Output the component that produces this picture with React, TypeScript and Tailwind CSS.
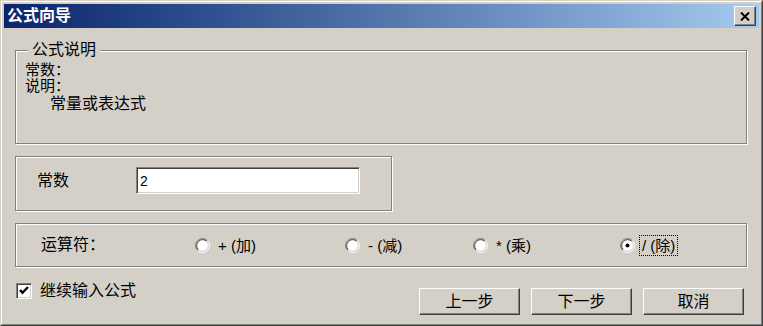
import React from 'react';

const FONT = { fontFamily: '"Liberation Sans", "Noto Sans CJK SC", sans-serif' };

// 经典风格单选框
function Radio({ checked }: { checked?: boolean }) {
  return (
    <svg width="15" height="15" viewBox="0 0 15 15" className="shrink-0">
      <circle cx="7.5" cy="7.5" r="6" fill="#ffffff" />
      <path d="M2.55 12.45 A7 7 0 0 1 12.45 2.55" fill="none" stroke="#808080" strokeWidth="1" />
      <path d="M12.45 2.55 A7 7 0 0 1 2.55 12.45" fill="none" stroke="#ffffff" strokeWidth="1" />
      <path d="M3.26 11.74 A6 6 0 0 1 11.74 3.26" fill="none" stroke="#404040" strokeWidth="1" />
      <path d="M11.74 3.26 A6 6 0 0 1 3.26 11.74" fill="none" stroke="#d4d0c8" strokeWidth="1" />
      {checked && <circle cx="7.5" cy="7.5" r="2" fill="#000000" />}
    </svg>
  );
}

function Button({ children }: { children: React.ReactNode }) {
  return (
    <div className="w-[101px] h-[27px] flex items-center justify-center text-[16px] text-black bg-[#d4d0c8]
      border border-t-white border-l-white border-b-[#404040] border-r-[#404040]
      shadow-[inset_-1px_-1px_0_#808080]">
      {children}
    </div>
  );
}

const OPS = [
  { label: '+ (加)', w: 'w-[150px]' },
  { label: '- (减)', w: 'w-[128px]' },
  { label: '* (乘)', w: 'w-[147px]' },
  { label: '/ (除)', w: '', checked: true },
];

export default function App() {
  return (
    <div style={FONT} className="w-[763px] h-[326px] bg-[#d4d0c8] text-black leading-none overflow-hidden
      border border-t-[#d4d0c8] border-l-[#d4d0c8] border-b-[#404040] border-r-[#404040]">
      <div className="w-full h-full p-[2px] border border-t-white border-l-white border-b-[#808080] border-r-[#808080]">
        {/* 标题栏 */}
        <div className="h-[24px] flex items-center justify-between bg-gradient-to-r from-[#0a246a] to-[#a6caf0]">
          <span className="pl-[3px] text-[16px] font-bold text-white">公式向导</span>
          <div className="mr-[3px] w-[22px] h-[20px] flex items-center justify-center bg-[#d4d0c8]
            border border-t-white border-l-white border-b-[#404040] border-r-[#404040]
            shadow-[inset_-1px_-1px_0_#808080]">
            <svg width="10" height="9" viewBox="0 0 10 9">
              <path d="M1 0.5 L9 8.5 M9 0.5 L1 8.5" stroke="#000" strokeWidth="2" />
            </svg>
          </div>
        </div>

        {/* 公式说明 */}
        <div className="relative ml-[11px] mt-[22px] w-[732px] h-[94px] border border-[#808080]
          shadow-[inset_1px_1px_0_#ffffff,1px_1px_0_#ffffff] pl-[9px] pt-[11px]">
          <span className="absolute -top-[10px] left-[12px] px-[4px] bg-[#d4d0c8] text-[16px] leading-[18px]">公式说明</span>
          <div className="text-[15px] leading-[16px]">常数：</div>
          <div className="text-[15px] leading-[16px]">说明：</div>
          <div className="text-[16px] leading-[17px] mt-[1px] pl-[25px]">常量或表达式</div>
        </div>

        {/* 常数 */}
        <div className="ml-[11px] mt-[12px] w-[377px] h-[55px] border border-[#808080]
          shadow-[inset_1px_1px_0_#ffffff,1px_1px_0_#ffffff] pt-[10px] pl-[21px] flex items-start">
          <div className="w-[99px] h-[27px] flex items-center text-[16px]">常数</div>
          <div className="w-[224px] h-[27px] bg-white border border-t-[#808080] border-l-[#808080] border-b-white border-r-white
            shadow-[inset_1px_1px_0_#404040,inset_-1px_-1px_0_#d4d0c8] flex items-center pl-[3px] text-[14px]">
            2
          </div>
        </div>

        {/* 运算符 */}
        <div className="ml-[11px] mt-[12px] w-[732px] h-[44px] border border-[#808080]
          shadow-[inset_1px_1px_0_#ffffff,1px_1px_0_#ffffff] pl-[25px] flex items-center text-[15px]">
          <div className="w-[154px] text-[16px]">运算符：</div>
          {OPS.map((op) => (
            <div key={op.label} className={`${op.w} flex items-center`}>
              <Radio checked={op.checked} />
              <span
                className={
                  op.checked
                    ? 'ml-[5px] px-[2px] py-[2px] outline outline-1 outline-dotted outline-black'
                    : 'ml-[8px]'
                }
              >
                {op.label}
              </span>
            </div>
          ))}
        </div>

        {/* 底部 */}
        <div className="ml-[11px] mt-[15px] w-[732px] flex items-start justify-between">
          <div className="flex items-center h-[17px]">
            <div className="ml-[1px] w-[16px] h-[16px] bg-white border border-t-[#808080] border-l-[#808080] border-b-white border-r-white
              shadow-[inset_1px_1px_0_#404040,inset_-1px_-1px_0_#d4d0c8] flex items-center justify-center">
              <svg width="10" height="9" viewBox="0 0 10 9">
                <path d="M1 4 L3.5 6.8 L9 1" fill="none" stroke="#000" strokeWidth="2.4" />
              </svg>
            </div>
            <span className="ml-[8px] text-[16px]">继续输入公式</span>
          </div>
          <div className="mt-[6px] mr-[3px] flex gap-[11px]">
            <Button>上一步</Button>
            <Button>下一步</Button>
            <Button>取消</Button>
          </div>
        </div>
      </div>
    </div>
  );
}
